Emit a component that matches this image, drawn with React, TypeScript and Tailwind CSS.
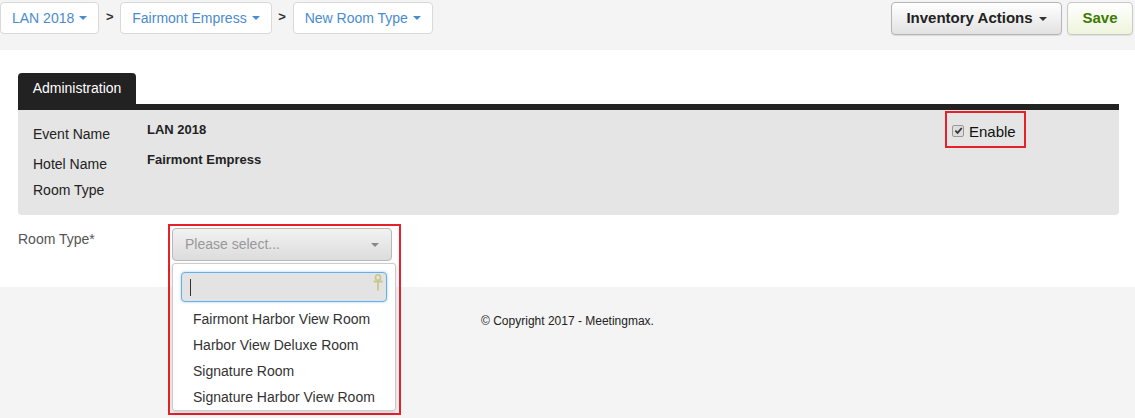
import React from "react";

const Caret = ({ className = "" }: { className?: string }) => (
  <span
    className={`inline-block w-0 h-0 border-l-[4px] border-r-[4px] border-t-[4px] border-l-transparent border-r-transparent ${className}`}
  />
);

const Crumb = ({ label }: { label: string }) => (
  <button className="h-[32px] px-[11px] bg-white border border-[#d9d9d9] rounded-[4px] text-[14px] text-[#4a8bd0] flex items-center gap-[5px]">
    {label}
    <Caret className="border-t-[#4a8bd0]" />
  </button>
);

const Sep = () => <span className="w-[21px] text-center text-[13px] font-bold text-[#333] -mt-[2px]">&gt;</span>;

export default function App() {
  const rooms = [
    "Fairmont Harbor View Room",
    "Harbor View Deluxe Room",
    "Signature Room",
    "Signature Harbor View Room",
  ];

  return (
    <div className="w-[1135px] h-[418px] overflow-hidden bg-[#f4f4f4] font-['Liberation_Sans',Arial,sans-serif] text-[#333]">
      {/* top bar */}
      <div className="h-[50px] flex items-start justify-between pt-[2px] pr-[2px]">
        <div className="flex items-center">
          <Crumb label="LAN 2018" />
          <Sep />
          <Crumb label="Fairmont Empress" />
          <Sep />
          <Crumb label="New Room Type" />
        </div>
        <div className="flex items-center gap-[5px]">
          <button className="h-[33px] w-[171px] rounded-[4px] border border-[#b5b5b5] bg-gradient-to-b from-white to-[#e2e2e2] text-[15px] font-bold text-[#222] flex items-center justify-center gap-[6px] shadow-[0_1px_1px_rgba(0,0,0,0.1)]">
            Inventory Actions
            <Caret className="border-t-[#333]" />
          </button>
          <button className="h-[33px] w-[66px] rounded-[4px] border border-[#c8c8c8] bg-gradient-to-b from-white to-[#eef5dc] text-[15px] font-bold text-[#3d7a00] shadow-[0_1px_1px_rgba(0,0,0,0.08)]">
            Save
          </button>
        </div>
      </div>

      {/* main */}
      <div className="bg-white h-[237px] px-[18px] pt-[23px] relative">
        <div className="flex">
          <div className="h-[31px] w-[118px] bg-[#222] rounded-t-[4px] text-white text-[14px] flex items-center justify-center">
            Administration
          </div>
        </div>
        <div className="h-[6px] w-[1101px] bg-[#222]" />
        <div className="w-[1101px] h-[105px] bg-[#e5e5e5] rounded-b-[4px] flex justify-between">
          <div className="pl-[15px] pt-[15px] flex">
            <div className="w-[114px] text-[14px] text-[#222] flex flex-col">
              <span className="leading-[18px]">Event Name</span>
              <span className="leading-[18px] mt-[12px]">Hotel Name</span>
              <span className="leading-[18px] mt-[8px]">Room Type</span>
            </div>
            <div className="text-[13px] font-bold text-[#222] flex flex-col -mt-[4px]">
              <span className="leading-[18px]">LAN 2018</span>
              <span className="leading-[18px] mt-[12px]">Fairmont Empress</span>
            </div>
          </div>
          <div className="mr-[93px] mt-[1px]">
            <div className="h-[37px] w-[81px] border-2 border-[#e8202a] flex items-center pl-[5px] pt-[5px] gap-[5px]">
              <span className="w-[12px] h-[12px] rounded-[2px] border border-[#999] bg-[#ddd] flex items-center justify-center -mt-[3px]">
                <svg width="9" height="9" viewBox="0 0 10 10">
                  <path d="M1.5 5.2 L4 7.6 L8.6 2.2" stroke="#333" strokeWidth="2" fill="none" />
                </svg>
              </span>
              <span className="text-[15px] text-[#111]">Enable</span>
            </div>
          </div>
        </div>

        <div className="flex mt-[9px]">
          <div className="w-[150px] text-[14px] text-[#555] pt-[5px]">Room Type*</div>
          <div className="relative z-10 w-[233px] h-[191px] border-2 border-[#e8202a] pt-[2px] pl-[2px]">
            <div className="w-[220px] h-[33px] rounded-[4px] border border-[#b8b8b8] bg-gradient-to-b from-[#f2f2f2] to-[#dcdcdc] flex items-center justify-between px-[12px]">
              <span className="text-[14px] text-[#999]">Please select...</span>
              <Caret className="border-t-[#888]" />
            </div>
            <div className="mt-[2px] w-[224px] h-[148px] bg-white border border-[#ccc] rounded-[3px] shadow-[0_2px_4px_rgba(0,0,0,0.15)] pt-[8px] px-[8px]">
              <div className="h-[30px] rounded-[4px] border border-[#66afe9] bg-[#e3e3e3] shadow-[0_0_3px_rgba(102,175,233,0.6)] flex items-center justify-between pl-[8px] pr-[3px]">
                <span className="w-px h-[17px] bg-[#333]" />
                <svg width="10" height="17" viewBox="0 0 10 17" className="-mt-[9px]">
                  <ellipse cx="5" cy="3.5" rx="2.6" ry="2.8" stroke="#c9c78a" strokeWidth="1.6" fill="none" />
                  <path d="M0.5 7.5 H9.5 M5 6.3 V16.5" stroke="#c9c78a" strokeWidth="1.8" fill="none" />
                </svg>
              </div>
              <div className="pl-[12px] pt-[4px] text-[14px] text-[#333]">
                {rooms.map((r) => (
                  <div key={r} className="h-[26px] flex items-center">
                    {r}
                  </div>
                ))}
              </div>
            </div>
          </div>
        </div>
      </div>

      {/* footer */}
      <div className="h-[131px] flex justify-center pt-[25px]">
        <span className="text-[12px] text-[#222]">© Copyright 2017 - Meetingmax.</span>
      </div>
    </div>
  );
}
